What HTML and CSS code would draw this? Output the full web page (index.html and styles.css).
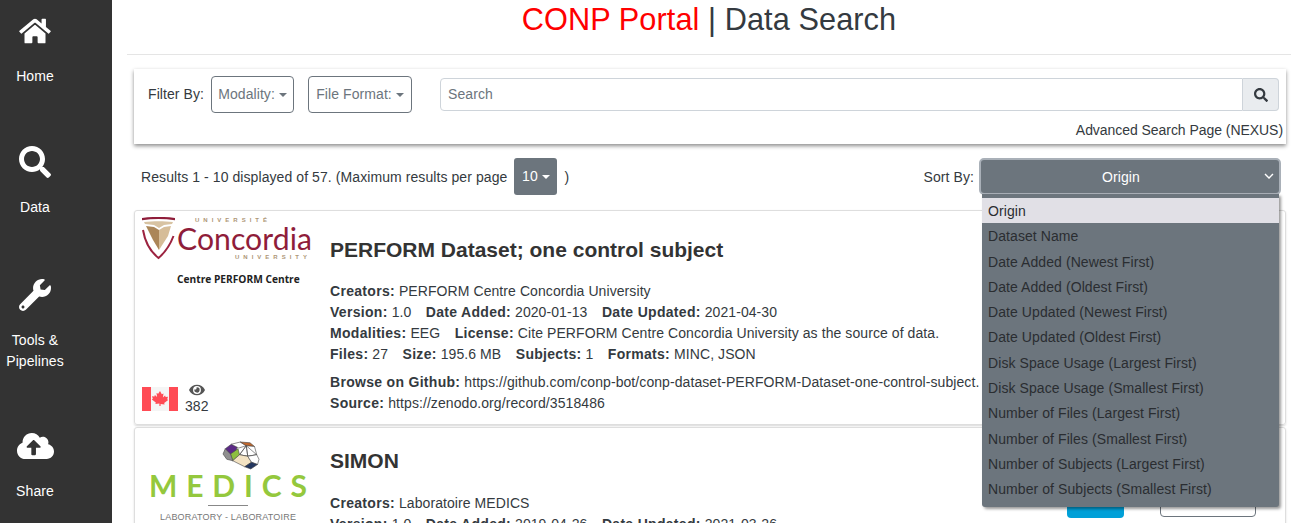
FILE: index.html
```html
<!DOCTYPE html>
<html lang="en">
<head>
    <meta charset="UTF-8">
    <meta name="viewport" content="width=device-width, initial-scale=1.0">
    <title>CONP Portal | Data Search</title>
    <link rel="stylesheet" href="styles.css">
</head>
<body>
    <nav class="sidebar">
        <a class="nav-item">
            <span class="nav-icon"><svg class="icon-home" viewBox="0 0 576 512"><path d="M280.37 148.26L96 300.11V464a16 16 0 0 0 16 16l112.06-.29a16 16 0 0 0 15.92-16V368a16 16 0 0 1 16-16h64a16 16 0 0 1 16 16v95.64a16 16 0 0 0 16 16.05L464 480a16 16 0 0 0 16-16V300L295.67 148.26a12.19 12.19 0 0 0-15.3 0zM571.6 251.47L488 182.56V44.05a12 12 0 0 0-12-12h-56a12 12 0 0 0-12 12v72.61L318.47 43a48 48 0 0 0-61 0L4.34 251.47a12 12 0 0 0-1.6 16.9l25.5 31A12 12 0 0 0 45.15 301l235.22-193.74a12.19 12.19 0 0 1 15.3 0L530.9 301a12 12 0 0 0 16.9-1.6l25.5-31a12 12 0 0 0-1.7-16.93z"/></svg></span>
            <span>Home</span>
        </a>
        <a class="nav-item">
            <span class="nav-icon"><svg class="icon-square" viewBox="0 0 512 512"><path d="M505 442.7L405.3 343c-4.5-4.5-10.6-7-17-7H372c27.6-35.3 44-79.7 44-128C416 93.1 322.9 0 208 0S0 93.1 0 208s93.1 208 208 208c48.3 0 92.7-16.4 128-44v16.3c0 6.4 2.5 12.5 7 17l99.7 99.7c9.4 9.4 24.6 9.4 33.9 0l28.3-28.3c9.4-9.4 9.4-24.6.1-34zM208 336c-70.7 0-128-57.2-128-128 0-70.7 57.2-128 128-128 70.7 0 128 57.2 128 128 0 70.7-57.2 128-128 128z"/></svg></span>
            <span>Data</span>
        </a>
        <a class="nav-item nav-item-tall">
            <span class="nav-icon"><svg class="icon-square" viewBox="0 0 512 512"><path d="M507.73 109.1c-2.24-9.03-13.54-12.09-20.12-5.51l-74.36 74.36-67.88-11.31-11.31-67.88 74.36-74.36c6.62-6.62 3.43-17.9-5.66-20.16-47.38-11.74-99.55.91-136.58 37.93-39.64 39.64-50.55 97.1-34.05 147.2L18.74 402.76c-24.99 24.99-24.99 65.51 0 90.5 24.99 24.99 65.51 24.99 90.5 0l213.21-213.21c50.12 16.71 107.47 5.68 147.37-34.22 37.07-37.07 49.7-89.32 37.91-136.73zM64 472c-13.25 0-24-10.75-24-24 0-13.26 10.75-24 24-24s24 10.74 24 24c0 13.25-10.75 24-24 24z"/></svg></span>
            <span>Tools &amp;<br>Pipelines</span>
        </a>
        <a class="nav-item">
            <span class="nav-icon"><svg class="icon-cloud" viewBox="0 0 640 512"><path d="M537.6 226.6c4.1-10.7 6.4-22.4 6.4-34.6 0-53-43-96-96-96-19.7 0-38.1 6-53.3 16.2C367 64.2 315.3 32 256 32c-88.4 0-160 71.6-160 160 0 2.7.1 5.4.2 8.1C40.2 219.8 0 273.2 0 336c0 79.5 64.5 144 144 144h368c70.7 0 128-57.3 128-128 0-61.9-44-113.6-102.4-125.4zM393.4 288H328v112c0 8.8-7.2 16-16 16h-48c-8.8 0-16-7.2-16-16V288h-65.4c-14.3 0-21.4-17.2-11.3-27.3l105.4-105.4c6.2-6.2 16.4-6.2 22.6 0l105.4 105.4c10.1 10.1 2.9 27.3-11.3 27.3z"/></svg></span>
            <span>Share</span>
        </a>
    </nav>

    <main class="main">
        <header class="page-header">
            <h1><span class="brand">CONP Portal</span> | Data Search</h1>
        </header>

        <section class="filter-card">
            <div class="filter-row">
                <span class="filter-label">Filter By:</span>
                <button class="filter-btn">Modality:<i class="caret"></i></button>
                <button class="filter-btn filter-btn-format">File Format:<i class="caret"></i></button>
                <div class="search-group">
                    <input class="search-input" type="text" placeholder="Search">
                    <span class="search-btn"><svg viewBox="0 0 512 512"><path d="M505 442.7L405.3 343c-4.5-4.5-10.6-7-17-7H372c27.6-35.3 44-79.7 44-128C416 93.1 322.9 0 208 0S0 93.1 0 208s93.1 208 208 208c48.3 0 92.7-16.4 128-44v16.3c0 6.4 2.5 12.5 7 17l99.7 99.7c9.4 9.4 24.6 9.4 33.9 0l28.3-28.3c9.4-9.4 9.4-24.6.1-34zM208 336c-70.7 0-128-57.2-128-128 0-70.7 57.2-128 128-128 70.7 0 128 57.2 128 128 0 70.7-57.2 128-128 128z"/></svg></span>
                </div>
            </div>
            <div class="advanced-link">Advanced Search Page (NEXUS)</div>
        </section>

        <section class="results-bar">
            <div class="results-count">
                <span class="results-text">Results 1 - 10 displayed of 57. (Maximum results per page</span>
                <button class="page-size">10<i class="caret"></i></button>
                <span class="results-text">)</span>
            </div>
            <div class="sort">
                <span class="sort-label">Sort By:</span>
                <div class="sort-box">
                    <div class="sort-select">
                        Origin
                        <svg class="sort-chevron" viewBox="0 0 10 6"><path d="M1 1l4 4 4-4"/></svg>
                    </div>
                    <ul class="sort-menu">
                        <li class="selected">Origin</li>
                        <li>Dataset Name</li>
                        <li>Date Added (Newest First)</li>
                        <li>Date Added (Oldest First)</li>
                        <li>Date Updated (Newest First)</li>
                        <li>Date Updated (Oldest First)</li>
                        <li>Disk Space Usage (Largest First)</li>
                        <li>Disk Space Usage (Smallest First)</li>
                        <li>Number of Files (Largest First)</li>
                        <li>Number of Files (Smallest First)</li>
                        <li>Number of Subjects (Largest First)</li>
                        <li>Number of Subjects (Smallest First)</li>
                    </ul>
                </div>
            </div>
        </section>

        <article class="dataset-card dataset-card-first">
            <div class="dataset-logo">
                <svg class="logo-concordia" viewBox="0 0 176 72">
                    <path d="M1 1c11-1.500 22-1.500 33 0v2.200c-11-1.500-22-1.500-33 0z" fill="#8f1d3a"/>
                    <path d="M3 5c9-1 20-1 29 0l-1 2-8 1-5 3-5-3-9-1z" fill="#d8c3a2"/>
                    <path d="M5 9l8 1 5 3v20l-6-10z" fill="#ab8658"/>
                    <path d="M18 13l5-3 7-1-3 10-9 14z" fill="#d6bd98"/>
                    <path d="M2 13c2 12 8 22 15.500 28 7-6 12-14 15-22" fill="none" stroke="#9c2340" stroke-width="2"/>
                    <text x="36" y="33" textLength="135" lengthAdjust="spacingAndGlyphs" class="logo-concordia-name">Concordia</text>
                    <text x="54" y="5" class="logo-concordia-small">UNIVERSITÉ</text>
                    <text x="94" y="42" class="logo-concordia-small">UNIVERSITY</text>
                    <text x="36" y="66" class="logo-concordia-centre">Centre PERFORM Centre</text>
                </svg>
                <div class="dataset-foot">
                    <svg class="flag" viewBox="0 0 36 24">
                        <rect width="36" height="24" fill="#f5f5f5"/>
                        <rect width="9" height="24" fill="#ff4b55"/>
                        <rect x="27" width="9" height="24" fill="#ff4b55"/>
                        <path d="M18 4l1.800 3.200 1.700-.8-.6 4.200 2.200-2 .5 1.500 2.400-.4-.8 2.600 1 .6-4 3.200.4 1.400-4-.5V19h-1.200v-2.500l-4 .5.4-1.400-4-3.200 1-.6-.8-2.600 2.400.4.5-1.500 2.200 2-.6-4.200 1.700.8z" fill="#ff4b55"/>
                    </svg>
                    <div class="views">
                        <svg class="views-eye" viewBox="0 0 576 512"><path d="M572.52 241.4C518.29 135.59 410.93 64 288 64S57.68 135.64 3.48 241.41a32.35 32.35 0 0 0 0 29.19C57.71 376.41 165.07 448 288 448s230.32-71.64 284.52-177.41a32.35 32.35 0 0 0 0-29.19zM288 400a144 144 0 1 1 144-144 143.93 143.93 0 0 1-144 144zm0-240a95.31 95.31 0 0 0-25.31 3.79 47.85 47.85 0 0 1-66.9 66.9A95.78 95.78 0 1 0 288 160z"/></svg>
                        <span>382</span>
                    </div>
                </div>
            </div>
            <div class="dataset-body">
                <h2>PERFORM Dataset; one control subject</h2>
                <div class="dataset-meta">
                    <div><b>Creators:</b> PERFORM Centre Concordia University</div>
                    <div><b>Version:</b> 1.0 <b class="gap">Date Added:</b> 2020-01-13 <b class="gap">Date Updated:</b> 2021-04-30</div>
                    <div><b>Modalities:</b> EEG <b class="gap">License:</b> Cite PERFORM Centre Concordia University as the source of data.</div>
                    <div><b>Files:</b> 27 <b class="gap">Size:</b> 195.6 MB <b class="gap">Subjects:</b> 1 <b class="gap">Formats:</b> MINC, JSON</div>
                </div>
                <div class="dataset-links">
                    <div><b>Browse on Github:</b> https://github.com/conp-bot/conp-dataset-PERFORM-Dataset-one-control-subject.</div>
                    <div><b>Source:</b> https://zenodo.org/record/3518486</div>
                </div>
            </div>
        </article>

        <article class="dataset-card">
            <div class="dataset-logo">
                <svg class="logo-medics" viewBox="0 0 176 96">
                    <g transform="translate(22 2) scale(.75)" stroke="#444" stroke-width=".8">
                        <path d="M83 17l8-6 8 3-2 8-10 3z" fill="#5b2a86"/>
                        <path d="M91 11l12-3 8 5-10 3z" fill="#fff"/>
                        <path d="M103 8l13 1 6 5-11-1z" fill="#c2672c"/>
                        <path d="M90 24l10-7 2 8-9 8z" fill="#8dbf3f"/>
                        <path d="M102 25l9-12 11 1 3 11-12 2z" fill="#fff"/>
                        <path d="M102 25l9-12 2 14zM111 13l2 14 12-2z" fill="none"/>
                        <path d="M93 33l9-8 11 2 5 8-9 6z" fill="#f3e3c3"/>
                        <path d="M113 27l12-2 3 6-2 7-8-3z" fill="#fff"/>
                        <path d="M109 41l9-6 8 3-9 6z" fill="#22365f"/>
                        <path d="M83 17l-3 7 5 7 8 2-3-9z" fill="#8f8f8f"/>
                    </g>
                    <text x="8" y="63" textLength="158" class="logo-medics-name">MEDICS</text>
                    <rect x="67" y="71" width="40" height="1" fill="#888"/>
                    <text x="19" y="86" textLength="136" class="logo-medics-sub">LABORATORY - LABORATOIRE</text>
                </svg>
            </div>
            <div class="dataset-body">
                <h2>SIMON</h2>
                <div class="dataset-meta">
                    <div><b>Creators:</b> Laboratoire MEDICS</div>
                    <div><b>Version:</b> 1.0 <b class="gap">Date Added:</b> 2019-04-26 <b class="gap">Date Updated:</b> 2021-03-26</div>
                </div>
            </div>
            <div class="dataset-actions">
                <span class="action-btn action-download"></span>
                <span class="action-btn action-outline"></span>
            </div>
        </article>
    </main>
</body>
</html>
```

FILE: styles.css
```css
* {
    box-sizing: border-box;
}
html, body {
    height: 100%;
    margin: 0;
    overflow: hidden;
}
body {
    display: flex;
    font-family: "Liberation Sans", Arial, sans-serif;
    font-size: 14px;
    line-height: 21px;
    letter-spacing: 0.08px;
    color: #343a40;
    background-color: white;
}
.sidebar {
    flex: 0 0 112px;
    height: 100%;
    padding-top: 15px;
    background-color: #333;
    color: white;
}
.nav-item {
    display: flex;
    flex-direction: column;
    align-items: center;
    width: 70px;
    text-align: center;
    margin-bottom: 59px;
}
.nav-item-tall {
    padding-top: 2px;
    margin-bottom: 58px;
}
.nav-icon {
    display: flex;
    align-items: center;
    justify-content: center;
    height: 32px;
    margin-bottom: 19px;
}
.nav-icon svg {
    fill: white;
}
.icon-home {
    width: 32px;
    height: 28px;
}
.icon-square {
    width: 32px;
    height: 32px;
}
.icon-cloud {
    width: 37px;
    height: 30px;
}
.main {
    flex: 1;
    min-width: 0;
    padding-left: 15px;
}
.page-header {
    height: 55px;
    border-bottom: 1px solid #e5e5e5;
    text-align: center;
}
h1 {
    margin: 0;
    font-size: 30.7px;
    font-weight: normal;
    line-height: 40px;
}
.brand {
    color: red;
}
.filter-card {
    width: 1152px;
    height: 75px;
    margin: 14px 0 0 7px;
    padding: 7px 3px 0 14px;
    background-color: white;
    box-shadow: 0 2px 4px rgba(0,0,0,0.45);
}
.filter-row {
    display: flex;
    align-items: flex-start;
}
.filter-label {
    margin-top: 8px;
    margin-right: 7px;
}
.filter-btn {
    width: 83px;
    height: 37px;
    padding: 0;
    margin-right: 14px;
    border: 1px solid #6c757d;
    border-radius: 4px;
    background-color: white;
    color: #6c757d;
    font: inherit;
    letter-spacing: inherit;
}
.filter-btn-format {
    width: 104px;
    margin-right: 28px;
}
.caret {
    display: inline-block;
    margin-left: 4px;
    vertical-align: 2px;
    border-top: 4px solid;
    border-left: 4px solid transparent;
    border-right: 4px solid transparent;
}
.search-group {
    display: flex;
    flex: 1;
    height: 33px;
    margin: 2px 4px 0 0;
}
.search-input {
    flex: 1;
    padding: 0 7px;
    border: 1px solid #ced4da;
    border-radius: 4px 0 0 4px;
    font: inherit;
    letter-spacing: inherit;
    outline: none;
}
.search-input::placeholder {
    color: #6c757d;
}
.search-btn {
    display: flex;
    align-items: center;
    justify-content: center;
    width: 36px;
    border: 1px solid #ced4da;
    border-left: none;
    border-radius: 0 4px 4px 0;
    background-color: #e9ecef;
}
.search-btn svg {
    width: 14px;
    height: 14px;
    fill: #343a40;
}
.advanced-link {
    margin-top: 7px;
    text-align: right;
    letter-spacing: -0.05px;
}
.results-bar {
    display: flex;
    justify-content: space-between;
    align-items: center;
    width: 1140px;
    height: 37px;
    margin: 14px 0 0 14px;
}
.results-count {
    display: flex;
    align-items: center;
}
.results-text {
    padding-top: 2px;
}
.page-size {
    width: 43px;
    height: 37px;
    margin: 0 7px;
    padding: 0;
    border: none;
    border-radius: 3px;
    background-color: #6c757d;
    color: white;
    font: inherit;
}
.sort {
    display: flex;
    align-items: center;
}
.sort-label {
    margin-right: 5px;
    padding-top: 2px;
}
.sort-box {
    position: relative;
    width: 302px;
}
.sort-select {
    position: relative;
    height: 37px;
    line-height: 34px;
    padding-right: 18px;
    border: 2px solid #a9b0b8;
    border-radius: 5px;
    background-color: #6c757d;
    color: white;
    text-align: center;
}
.sort-chevron {
    position: absolute;
    right: 5px;
    top: 13px;
    width: 10px;
    height: 6px;
    fill: none;
    stroke: white;
    stroke-width: 1.4;
}
.sort-menu {
    position: absolute;
    z-index: 10;
    top: 36px;
    left: 3px;
    width: 297px;
    height: 313px;
    margin: 0;
    padding: 4px 0 0;
    list-style: none;
    background-color: #6c757d;
    border-radius: 0 0 3px 3px;
    color: #2a2d31;
    box-shadow: 2px 2px 3px rgba(0,0,0,0.4);
}
.sort-menu li {
    height: 25.3px;
    padding: 3px 6px 0;
}
.sort-menu .selected {
    background-color: #e1e0e6;
}
.dataset-card {
    display: flex;
    position: relative;
    width: 1152px;
    margin: 2px 0 0 7px;
    border: 1px solid #dedede;
    border-radius: 3px;
    box-shadow: 0 1px 2px rgba(0,0,0,0.15);
}
.dataset-card-first {
    height: 215px;
    margin-top: 15px;
}
.dataset-logo {
    display: flex;
    flex-direction: column;
    flex: 0 0 195px;
    padding: 6px 0 9px 6px;
}
.logo-concordia {
    width: 176px;
    height: 72px;
}
.logo-concordia-name {
    font-family: Lato, "Liberation Sans", sans-serif;
    font-size: 30px;
    fill: #8f1d3a;
}
.logo-concordia-small {
    font-family: "Liberation Sans", sans-serif;
    font-size: 6px;
    font-weight: bold;
    letter-spacing: 4px;
    fill: #ad9676;
}
.logo-concordia-centre {
    font-family: "Open Sans", "Liberation Sans", sans-serif;
    font-size: 10.2px;
    font-weight: bold;
    letter-spacing: 0;
    fill: #222;
}
.dataset-foot {
    display: flex;
    align-items: flex-end;
    margin-top: auto;
}
.flag {
    width: 36px;
    height: 24px;
    margin: 0 7px 4px 1px;
}
.views {
    display: flex;
    flex-direction: column;
    align-items: center;
    line-height: 18px;
}
.views-eye {
    width: 16px;
    height: 14px;
    fill: #555;
}
.logo-medics {
    width: 176px;
    height: 96px;
}
.logo-medics-name {
    font-family: Lato, "Liberation Sans", sans-serif;
    font-size: 30px;
    font-weight: bold;
    fill: #94c83d;
}
.logo-medics-sub {
    font-family: "Liberation Sans", sans-serif;
    font-size: 9px;
    fill: #777;
}
.dataset-body {
    flex: 1;
    min-width: 0;
    padding-top: 21px;
    white-space: nowrap;
}
.dataset-card-first .dataset-body {
    padding-top: 27px;
}
h2 {
    margin: 0 0 19.5px;
    font-size: 21px;
    line-height: 24px;
    letter-spacing: 0;
    color: #333;
}
.dataset-card-first h2 {
    margin-bottom: 18.5px;
}
b {
    letter-spacing: 0.3px;
    color: #343a40;
}
.gap {
    margin-left: 10.5px;
}
.dataset-links {
    margin-top: 7px;
}
.dataset-actions {
    position: absolute;
    top: 43px;
    left: 932px;
    display: flex;
    gap: 36px;
}
.action-btn {
    height: 47px;
    border-radius: 4px;
}
.action-download {
    width: 57px;
    background-color: #00a0d8;
}
.action-outline {
    width: 96px;
    height: 46px;
    border: 1px solid #6c757d;
}
```
